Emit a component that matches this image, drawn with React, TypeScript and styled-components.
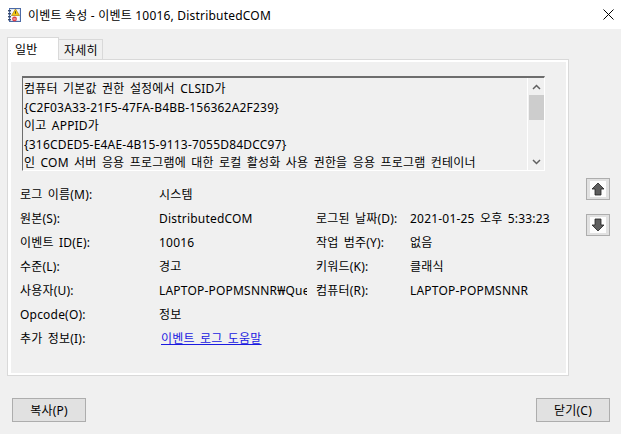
import * as React from 'react';
import styled, { createGlobalStyle } from 'styled-components';

const Global = createGlobalStyle`
	html, body {
		margin: 0;
		padding: 0;
		background: #f0f0f0;
	}
	body {
		font-family: 'Noto Sans', 'Noto Sans CJK KR', sans-serif;
		font-size: 12px;
		letter-spacing: 0.2px;
		word-spacing: 2px;
		color: #000;
	}
`;

const description = [
	'컴퓨터 기본값 권한 설정에서 CLSID가',
	'{C2F03A33-21F5-47FA-B4BB-156362A2F239}',
	'이고 APPID가',
	'{316CDED5-E4AE-4B15-9113-7055D84DCC97}',
	'인 COM 서버 응용 프로그램에 대한 로컬 활성화 사용 권한을 응용 프로그램 컨테이너',
	'Unavailable SID (Unavailable)에서 실행 중인 주소 LocalHost(LRPC 사용)의 사용자',
	'LAPTOP-POPMSNNR₩Queen SID에게 부여하지 않았습니다.'
];

type Field = { label: string; value?: string; label2?: string; value2?: string; link?: boolean };

const fields: Field[] = [
	{ label: '로그 이름(M):', value: '시스템' },
	{ label: '원본(S):', value: 'DistributedCOM', label2: '로그된 날짜(D):', value2: '2021-01-25 오후 5:33:23' },
	{ label: '이벤트 ID(E):', value: '10016', label2: '작업 범주(Y):', value2: '없음' },
	{ label: '수준(L):', value: '경고', label2: '키워드(K):', value2: '클래식' },
	{ label: '사용자(U):', value: 'LAPTOP-POPMSNNR₩Queen', label2: '컴퓨터(R):', value2: 'LAPTOP-POPMSNNR' },
	{ label: 'Opcode(O):', value: '정보' },
	{ label: '추가 정보(I):', value: '이벤트 로그 도움말', link: true }
];

const EventIcon = () => (
	<svg width="16" height="16" viewBox="0 0 16 16">
		<rect x="3.5" y="1.5" width="11" height="13" fill="#dfe7f5" stroke="#4b6aa6" />
		<rect x="5" y="3" width="8" height="10" fill="#f7f9fd" />
		<rect x="2" y="3" width="3" height="1.4" fill="#394a6b" />
		<rect x="2" y="6" width="3" height="1.4" fill="#394a6b" />
		<rect x="2" y="9" width="3" height="1.4" fill="#394a6b" />
		<rect x="2" y="12" width="3" height="1.4" fill="#394a6b" />
		<polygon points="9.5,2 13.5,8.5 5.5,8.5" fill="#f6c812" stroke="#a7820a" strokeWidth="0.7" />
		<rect x="9.1" y="4.3" width="0.9" height="2.4" fill="#333" />
		<circle cx="8.5" cy="12" r="2.4" fill="#e0424a" />
		<rect x="7.3" y="11.6" width="2.4" height="0.8" fill="#fff" />
	</svg>
);

const CloseIcon = () => (
	<svg width="11" height="11" viewBox="0 0 11 11">
		<path d="M0.5 0.5 L10.5 10.5 M10.5 0.5 L0.5 10.5" stroke="#000" strokeWidth="1" />
	</svg>
);

const Chevron = (props: { down?: boolean }) => (
	<svg width="9" height="6" viewBox="0 0 9 6">
		<path
			d={props.down ? 'M1 1 L4.5 4.5 L8 1' : 'M1 5 L4.5 1.5 L8 5'}
			stroke="#606060"
			strokeWidth="1.5"
			fill="none"
		/>
	</svg>
);

const MoveArrow = (props: { down?: boolean }) => (
	<svg width="16" height="16" viewBox="0 0 16 16">
		<rect x="0" y="0" width="16" height="16" fill="#fdfdfd" />
		<g transform={props.down ? 'rotate(180 8 8)' : undefined}>
			<polygon
				points="8,2 14,8 11,8 11,14 5,14 5,8 2,8"
				fill="#5e5e5e"
				stroke="#222"
				strokeWidth="0.8"
			/>
		</g>
	</svg>
);

const App = () => {
	return (
		<>
			<Global />
			<Window>
				<TitleBar>
					<EventIcon />
					<TitleText>이벤트 속성 - 이벤트 10016, DistributedCOM</TitleText>
					<CloseBox>
						<CloseIcon />
					</CloseBox>
				</TitleBar>
				<Main>
					<TabColumn>
						<TabStrip>
							<Tab $active>일반</Tab>
							<Tab>자세히</Tab>
						</TabStrip>
						<Panel>
							<PanelInner>
								<TextBox>
									<TextContent>
										{description.map(line => (
											<div key={line}>{line}</div>
										))}
									</TextContent>
									<ScrollBar>
										<ScrollArrow>
											<Chevron />
										</ScrollArrow>
										<Thumb />
										<ScrollTrack />
										<ScrollArrow>
											<Chevron down />
										</ScrollArrow>
									</ScrollBar>
								</TextBox>
								<Fields>
									{fields.map(f => (
										<React.Fragment key={f.label}>
											<Label>{f.label}</Label>
											{f.link ? (
												<Value>
													<Link>{f.value}</Link>
												</Value>
											) : (
												<Value>{f.value}</Value>
											)}
											<Label $second>{f.label2}</Label>
											<Value>{f.value2}</Value>
										</React.Fragment>
									))}
								</Fields>
							</PanelInner>
						</Panel>
					</TabColumn>
					<ArrowColumn>
						<ArrowButton>
							<MoveArrow />
						</ArrowButton>
						<ArrowButton>
							<MoveArrow down />
						</ArrowButton>
					</ArrowColumn>
				</Main>
				<Footer>
					<DialogButton>복사(P)</DialogButton>
					<DialogButton>닫기(C)</DialogButton>
				</Footer>
			</Window>
		</>
	);
};

export default App;

const Window = styled.div`
	width: 621px;
	height: 434px;
	overflow: hidden;
	display: flex;
	flex-direction: column;
	background: #f0f0f0;
`;

const TitleBar = styled.div`
	height: 29px;
	flex-shrink: 0;
	display: flex;
	align-items: center;
	padding-left: 6px;
	background: #fff;
`;

const TitleText = styled.div`
	margin-left: 6px;
	white-space: nowrap;
	word-spacing: 0;
`;

const CloseBox = styled.div`
	margin-left: auto;
	width: 26px;
	height: 29px;
	display: flex;
	align-items: center;
	justify-content: center;
`;

const Main = styled.div`
	display: flex;
	padding: 8px 0 0 7px;
`;

const TabColumn = styled.div`
	width: 562px;
	display: flex;
	flex-direction: column;
`;

const TabStrip = styled.div`
	position: relative;
	z-index: 1;
	height: 23px;
	margin-bottom: -1px;
	display: flex;
	align-items: flex-end;
`;

const Tab = styled.div<{ $active?: boolean }>`
	box-sizing: border-box;
	width: ${p => (p.$active ? '52px' : '45px')};
	height: ${p => (p.$active ? '23px' : '20px')};
	margin-bottom: ${p => (p.$active ? '0' : '1px')};
	margin-left: ${p => (p.$active ? '0' : '-1px')};
	padding-left: ${p => (p.$active ? '7px' : '5px')};
	border: 1px solid #d9d9d9;
	border-bottom: none;
	background: ${p => (p.$active ? '#fff' : '#f0f0f0')};
	display: flex;
	align-items: center;
	white-space: nowrap;
`;

const Panel = styled.div`
	box-sizing: border-box;
	height: 317px;
	border: 1px solid #d9d9d9;
	background: #fff;
	padding: 2px 2px 2px 3px;
`;

const PanelInner = styled.div`
	box-sizing: border-box;
	height: 100%;
	background: #f0f0f0;
	padding: 14px 0 0 9px;
`;

const TextBox = styled.div`
	box-sizing: border-box;
	width: 523px;
	height: 95px;
	margin-left: 2px;
	display: flex;
	border-style: solid;
	border-width: 2px 1px 1px 1px;
	border-color: #6d6d6d #fff #fff #6d6d6d;
`;

const TextContent = styled.div`
	flex: 1;
	overflow: hidden;
	white-space: nowrap;
	padding: 2px 0 0 1px;
	line-height: 18.5px;
`;

const ScrollBar = styled.div`
	box-sizing: border-box;
	width: 17px;
	border-left: 1px solid #fff;
	display: flex;
	flex-direction: column;
	align-items: center;
`;

const ScrollArrow = styled.div`
	height: 17px;
	display: flex;
	align-items: center;
	justify-content: center;
`;

const Thumb = styled.div`
	width: 15px;
	height: 25px;
	background: #cdcdcd;
`;

const ScrollTrack = styled.div`
	flex: 1;
`;

const Fields = styled.div`
	margin-top: 11px;
	display: grid;
	grid-template-columns: 139px 148px 103px 1fr;
	grid-auto-rows: 24px;
	align-items: center;
`;

const Label = styled.div<{ $second?: boolean }>`
	white-space: nowrap;
	padding-left: ${p => (p.$second ? '9px' : '0')};
`;

const Value = styled.div`
	white-space: nowrap;
	overflow: hidden;
`;

const Link = styled.span`
	margin-left: 2px;
	color: #1a1ae0;
	text-decoration: underline;
`;

const ArrowColumn = styled.div`
	margin-left: 17px;
	padding-top: 141px;
	display: flex;
	flex-direction: column;
	gap: 14px;
`;

const ArrowButton = styled.div`
	box-sizing: border-box;
	width: 24px;
	height: 22px;
	border: 1px solid #adadad;
	background: #e1e1e1;
	display: flex;
	align-items: center;
	justify-content: center;
`;

const Footer = styled.div`
	display: flex;
	justify-content: space-between;
	padding: 22px 11px 0 12px;
`;

const DialogButton = styled.button`
	box-sizing: border-box;
	width: 74px;
	height: 24px;
	padding: 0;
	border: 1px solid #adadad;
	background: #e1e1e1;
	font-family: inherit;
	font-size: 12px;
	letter-spacing: inherit;
	word-spacing: inherit;
	color: #000;
`;
